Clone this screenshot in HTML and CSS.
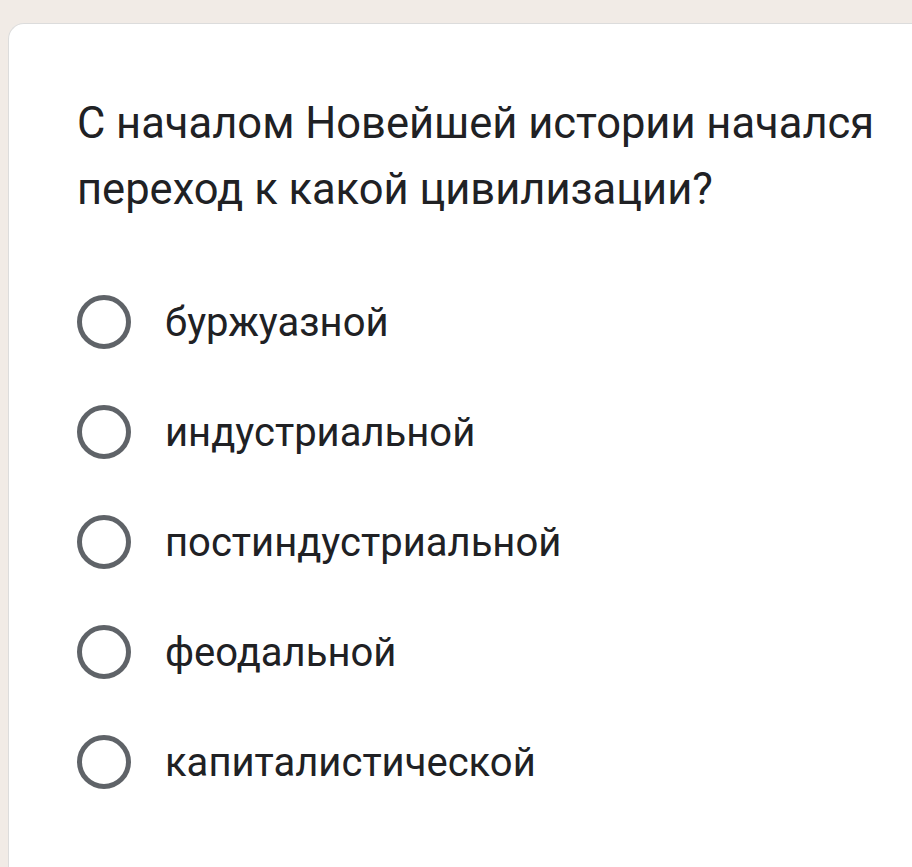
FILE: index.html
```html
<!DOCTYPE html>
<html lang="ru">
<head>
<meta charset="utf-8">
<link rel="stylesheet" href="styles.css">
</head>
<body>
<div class="card">
  <div class="question">С началом Новейшей истории начался переход к какой цивилизации?</div>
  <div class="options">
    <label class="option"><span class="radio"></span><span class="text">буржуазной</span></label>
    <label class="option"><span class="radio"></span><span class="text">индустриальной</span></label>
    <label class="option"><span class="radio"></span><span class="text">постиндустриальной</span></label>
    <label class="option"><span class="radio"></span><span class="text">феодальной</span></label>
    <label class="option"><span class="radio"></span><span class="text">капиталистической</span></label>
  </div>
</div>
</body>
</html>
```
FILE: styles.css
```css
html, body {
  margin: 0;
  padding: 0;
  background: #f1ebe6;
  width: 912px;
  height: 867px;
  overflow: hidden;
}
body {
  padding: 23px 0 0 8px;
  box-sizing: border-box;
  font-family: Roboto, "Noto Sans", sans-serif;
  color: #202124;
}
.card {
  background: #fff;
  border: 1px solid #dcdcdc;
  border-right: none;
  border-bottom: none;
  border-radius: 16px 0 0 0;
  height: 844px;
  padding: 67px 0 0 68px;
  box-sizing: border-box;
}
.question {
  font-size: 43.5px;
  line-height: 66px;
  width: 830px;
}
.options {
  margin-top: 44px;
  display: flex;
  flex-direction: column;
}
.option {
  display: flex;
  align-items: center;
  height: 110px;
}
.radio {
  width: 44px;
  height: 44px;
  border: 5px solid #5f6368;
  border-radius: 50%;
  flex: none;
}
.text {
  margin-left: 34px;
  font-size: 40px;
}
```
